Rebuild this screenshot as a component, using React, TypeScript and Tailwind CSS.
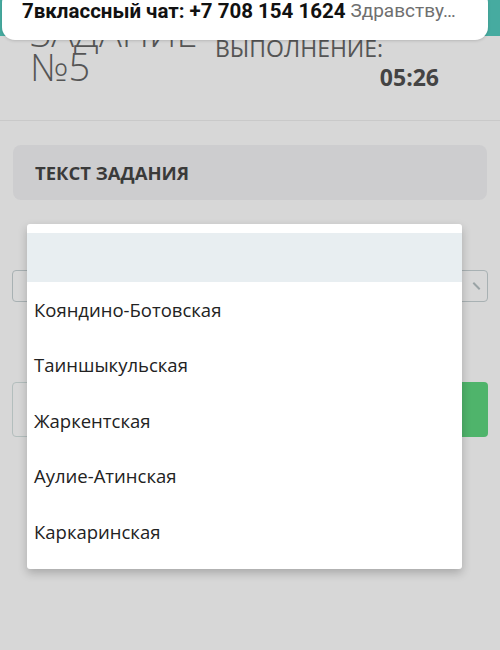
const options = [
  "Кояндино-Ботовская",
  "Таиншыкульская",
  "Жаркентская",
  "Аулие-Атинская",
  "Каркаринская",
];

export default function App() {
  return (
    <div className="relative h-[650px] w-[500px] overflow-hidden bg-[#d7d7d7] font-['Open_Sans',sans-serif] text-[#333]">
      {/* Task header */}
      <div className="flex h-[121px] border-b border-[#c9c9c9] pl-[30px] pr-[61px] pt-[15px]">
        <div className="flex-1 text-[38px] font-light leading-[34px] text-[#555]">
          <div>ЗАДАНИЕ</div>
          <div>№5</div>
        </div>
        <div className="w-[224px] pt-[20px] text-[23px] leading-[26px] text-[#555]">
          <div>ВЫПОЛНЕНИЕ:</div>
          <div className="mt-[2px] text-right text-[23px] font-bold leading-[28px] text-[#444]">05:26</div>
        </div>
      </div>

      {/* Task text card */}
      <div className="mx-[13px] mt-[24px] flex h-[55px] items-center rounded-lg bg-[#cdcdcf] px-[22px] text-[18.5px] font-bold text-[#3a3a3a]">
        ТЕКСТ ЗАДАНИЯ
      </div>

      {/* Answer field */}
      <div className="mx-[12px] mt-[70px] flex h-[32px] justify-end rounded border-[1.5px] border-[#a8b1b3] bg-[#d7d7d7] pr-[6px] pt-[14px]">
        <div className="h-[2px] w-[9px] rotate-45 bg-[#9aa3a5]" />
      </div>

      {/* Buttons */}
      <div className="mx-[12px] mt-[80px] flex h-[55px] gap-[12px]">
        <div className="flex-1 rounded border-[1.5px] border-[#b3bebd]" />
        <div className="w-[200px] rounded bg-[#4fb46b]" />
      </div>

      {/* Select dropdown */}
      <div className="absolute left-[27px] top-[224px] w-[435px] rounded-[3px] bg-white py-[9px] shadow-[0_4px_10px_rgba(0,0,0,0.22)]">
        <div className="h-[49px] bg-[#e8eef1]" />
        {options.map((o) => (
          <div key={o} className="flex h-[55.5px] items-center px-[7px] text-[18.5px] text-[#222]">
            {o}
          </div>
        ))}
      </div>

      {/* Status bar strip */}
      <div className="absolute left-0 top-0 h-[36px] w-[500px] bg-[#46aba0]" />

      {/* Notification */}
      <div className="absolute left-[2px] top-[-10px] flex h-[50px] w-[486px] items-end rounded-[13px] bg-white pb-[17px] pl-[20px] font-['Roboto',sans-serif] leading-[24px] shadow-[0_1px_3px_rgba(0,0,0,0.15)]">
        <span className="text-[20.5px] font-bold text-[#111]">7вклассный чат: +7 708 154 1624</span>
        <span className="ml-[5px] text-[19px] text-[#6f6f6f]">Здравству…</span>
      </div>
    </div>
  );
}
